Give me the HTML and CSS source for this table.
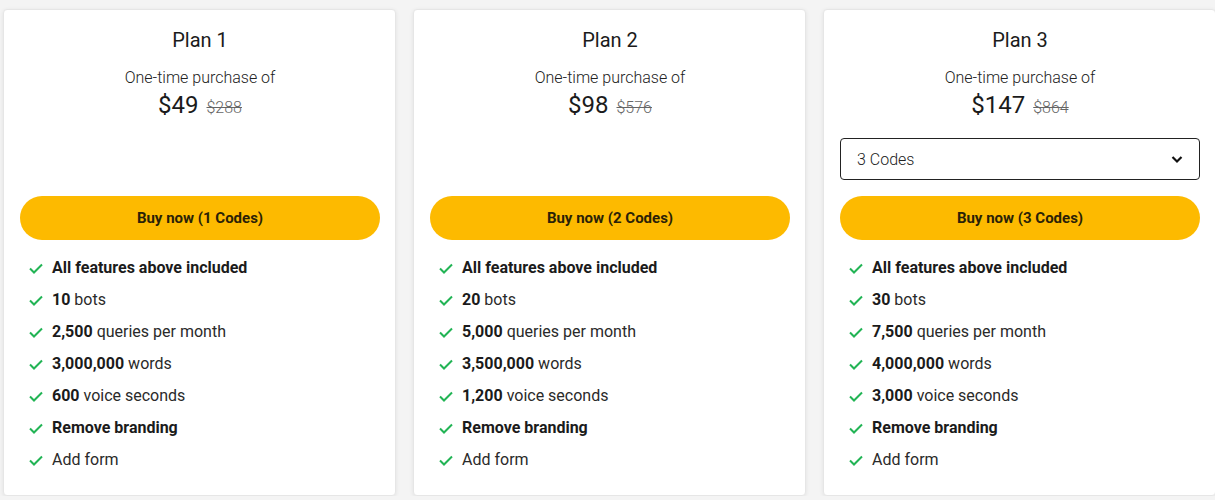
FILE: index.html
```html
<!DOCTYPE html>
<html lang="en">

<head>
    <meta charset="UTF-8">
    <meta name="viewport" content="width=device-width, initial-scale=1.0">
    <title>Plans</title>
    <link rel="stylesheet" href="styles.css">
</head>

<body>
    <div class="plans">
        <!-- Plan 1 -->
        <div class="plan-card">
            <h2>Plan 1</h2>
            <p class="subtitle">One-time purchase of</p>
            <div class="price"><span class="now">$49</span> <s class="was">$288</s></div>
            <div class="select-slot"></div>
            <button class="buy">Buy now (1 Codes)</button>
            <ul class="features">
                <li><svg viewBox="0 0 16 16"><path d="M2 8.5l4 4 8-8"/></svg><b>All features above included</b></li>
                <li><svg viewBox="0 0 16 16"><path d="M2 8.5l4 4 8-8"/></svg><span><b>10</b> bots</span></li>
                <li><svg viewBox="0 0 16 16"><path d="M2 8.5l4 4 8-8"/></svg><span><b>2,500</b> queries per month</span></li>
                <li><svg viewBox="0 0 16 16"><path d="M2 8.5l4 4 8-8"/></svg><span><b>3,000,000</b> words</span></li>
                <li><svg viewBox="0 0 16 16"><path d="M2 8.5l4 4 8-8"/></svg><span><b>600</b> voice seconds</span></li>
                <li><svg viewBox="0 0 16 16"><path d="M2 8.5l4 4 8-8"/></svg><b>Remove branding</b></li>
                <li><svg viewBox="0 0 16 16"><path d="M2 8.5l4 4 8-8"/></svg><span>Add form</span></li>
            </ul>
        </div>

        <!-- Plan 2 -->
        <div class="plan-card">
            <h2>Plan 2</h2>
            <p class="subtitle">One-time purchase of</p>
            <div class="price"><span class="now">$98</span> <s class="was">$576</s></div>
            <div class="select-slot"></div>
            <button class="buy">Buy now (2 Codes)</button>
            <ul class="features">
                <li><svg viewBox="0 0 16 16"><path d="M2 8.5l4 4 8-8"/></svg><b>All features above included</b></li>
                <li><svg viewBox="0 0 16 16"><path d="M2 8.5l4 4 8-8"/></svg><span><b>20</b> bots</span></li>
                <li><svg viewBox="0 0 16 16"><path d="M2 8.5l4 4 8-8"/></svg><span><b>5,000</b> queries per month</span></li>
                <li><svg viewBox="0 0 16 16"><path d="M2 8.5l4 4 8-8"/></svg><span><b>3,500,000</b> words</span></li>
                <li><svg viewBox="0 0 16 16"><path d="M2 8.5l4 4 8-8"/></svg><span><b>1,200</b> voice seconds</span></li>
                <li><svg viewBox="0 0 16 16"><path d="M2 8.5l4 4 8-8"/></svg><b>Remove branding</b></li>
                <li><svg viewBox="0 0 16 16"><path d="M2 8.5l4 4 8-8"/></svg><span>Add form</span></li>
            </ul>
        </div>

        <!-- Plan 3 -->
        <div class="plan-card">
            <h2>Plan 3</h2>
            <p class="subtitle">One-time purchase of</p>
            <div class="price"><span class="now">$147</span> <s class="was">$864</s></div>
            <div class="select-slot">
                <div class="code-select">
                    <span>3 Codes</span>
                    <svg viewBox="0 0 16 16"><path d="M3.5 6l4.5 4.5 4.5-4.5"/></svg>
                </div>
            </div>
            <button class="buy">Buy now (3 Codes)</button>
            <ul class="features">
                <li><svg viewBox="0 0 16 16"><path d="M2 8.5l4 4 8-8"/></svg><b>All features above included</b></li>
                <li><svg viewBox="0 0 16 16"><path d="M2 8.5l4 4 8-8"/></svg><span><b>30</b> bots</span></li>
                <li><svg viewBox="0 0 16 16"><path d="M2 8.5l4 4 8-8"/></svg><span><b>7,500</b> queries per month</span></li>
                <li><svg viewBox="0 0 16 16"><path d="M2 8.5l4 4 8-8"/></svg><span><b>4,000,000</b> words</span></li>
                <li><svg viewBox="0 0 16 16"><path d="M2 8.5l4 4 8-8"/></svg><span><b>3,000</b> voice seconds</span></li>
                <li><svg viewBox="0 0 16 16"><path d="M2 8.5l4 4 8-8"/></svg><b>Remove branding</b></li>
                <li><svg viewBox="0 0 16 16"><path d="M2 8.5l4 4 8-8"/></svg><span>Add form</span></li>
            </ul>
        </div>
    </div>
</body>

</html>
```

FILE: styles.css
```css
body {
    font-family: Roboto, "Liberation Sans", Arial, sans-serif;
    background-color: #f4f4f4;
    margin: 0;
    padding: 9px 0 0 3px;
    color: #1f1f1f;
    overflow: hidden;
}

.plans {
    display: grid;
    grid-template-columns: repeat(3, 393px);
    gap: 17px;
}

.plan-card {
    background: #fff;
    border: 1px solid #e6e6e6;
    border-radius: 4px;
    box-shadow: 0 1px 4px rgba(0, 0, 0, 0.08);
    padding: 16px 15px 24px 16px;
    text-align: center;
}

.plan-card h2 {
    margin: 0;
    font-size: 20px;
    font-weight: 400;
    line-height: 28px;
    color: #1b1b1b;
}

.subtitle {
    margin: 12px 0 0;
    font-size: 16px;
    font-weight: 300;
    line-height: 24px;
    color: #222;
}

.price {
    line-height: 30px;
    display: flex;
    justify-content: center;
    align-items: baseline;
    gap: 8px;
}

.price .now {
    font-size: 24px;
    color: #1b1b1b;
}

.price .was {
    font-size: 16px;
    color: #666;
    font-weight: 300;
}

.select-slot {
    height: 42px;
    margin-top: 15px;
}

.code-select {
    height: 42px;
    box-sizing: border-box;
    border: 1px solid #222;
    border-radius: 4px;
    display: flex;
    align-items: center;
    justify-content: space-between;
    padding: 0 14px 0 16px;
    font-size: 16px;
    font-weight: 300;
    color: #222;
}

.code-select svg {
    width: 16px;
    height: 16px;
    fill: none;
    stroke: #111;
    stroke-width: 2.2;
}

.buy {
    display: block;
    width: 100%;
    height: 44px;
    margin-top: 16px;
    border: none;
    border-radius: 22px;
    background-color: #fdba00;
    color: #2a2207;
    font-family: inherit;
    font-size: 15px;
    font-weight: 700;
    cursor: pointer;
}

.features {
    list-style-type: none;
    margin: 17px 0 0;
    padding: 0 0 0 8px;
    text-align: left;
    display: flex;
    flex-direction: column;
    gap: 10px;
}

.features li {
    display: flex;
    align-items: center;
    gap: 8px;
    font-size: 16px;
    line-height: 22px;
    color: #2a2a2a;
}

.features li b {
    font-weight: 700;
    color: #1b1b1b;
}

.features svg {
    width: 16px;
    height: 16px;
    flex: 0 0 16px;
    fill: none;
    stroke: #22b455;
    stroke-width: 2;
}
```
